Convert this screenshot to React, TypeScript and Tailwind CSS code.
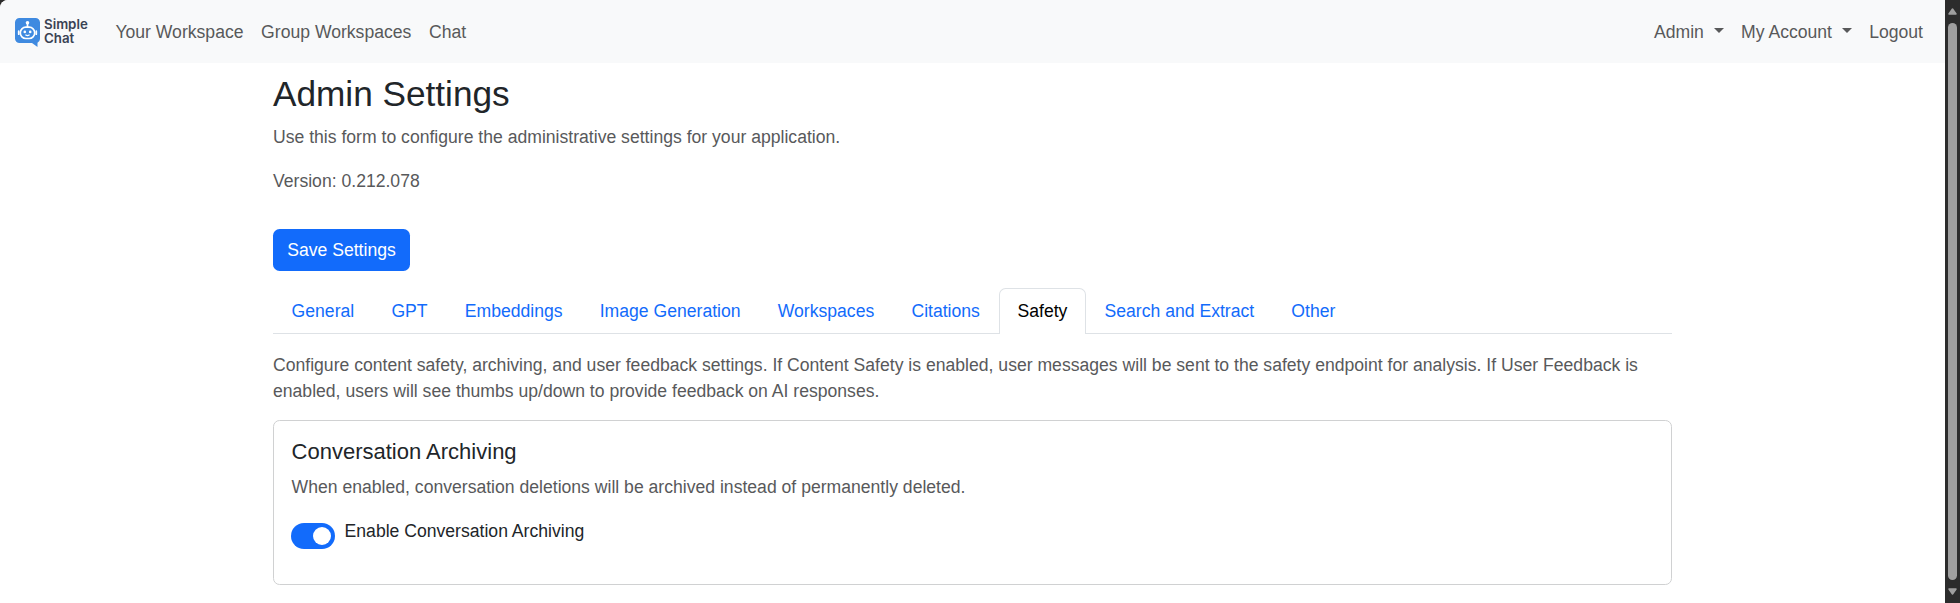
import React from "react";

const tabs = ["General", "GPT", "Embeddings", "Image Generation", "Workspaces", "Citations", "Safety", "Search and Extract", "Other"];

function Logo() {
  return (
    <div className="flex w-[74px] items-start gap-[4px] pt-[2px]">
      <svg width="25" height="29" viewBox="0 0 25 29" className="shrink-0">
        <path d="M4.500 0h16a4.500 4.500 0 0 1 4.500 4.500v16a4.500 4.500 0 0 1-2.500 4.200v4.300l-5.500-4H4.500A4.500 4.500 0 0 1 0 20.500v-16A4.500 4.500 0 0 1 4.500 0z" fill="#3f8ae0" />
        <g fill="none" stroke="#fff" strokeWidth="1.700" strokeLinecap="round">
          <path d="M12.500 5.500v3.500" />
          <rect x="5.300" y="9.200" width="14.400" height="11.300" rx="5.500" />
          <path d="M3.700 13.200v3M21.300 13.200v3" />
          <path d="M10.800 17q1.700 1.200 3.400 0" strokeWidth="1.200" />
        </g>
        <circle cx="12.500" cy="4.800" r="1.800" fill="#fff" />
        <circle cx="9.800" cy="13.900" r="1.300" fill="#fff" />
        <circle cx="15.200" cy="13.900" r="1.300" fill="#fff" />
      </svg>
      <div className="font-['Inter',sans-serif] text-[13.300px] leading-[13.500px] font-semibold text-[#3a4354]">
        Simple
        <br />
        Chat
      </div>
    </div>
  );
}

function Caret() {
  return (
    <svg width="10" height="5" viewBox="0 0 10 5" className="mt-[-4px] ml-[10px]">
      <path d="M0 0h10L5 5z" fill="#58595a" />
    </svg>
  );
}

function Scrollbar() {
  return (
    <div className="flex w-[15px] shrink-0 flex-col items-center bg-[#2c2c2c] pt-[8px] pb-[8px]">
      <svg width="9" height="7" viewBox="0 0 9 7" className="shrink-0">
        <path d="M4.500 1L8 6H1z" fill="#9f9f9f" stroke="#9f9f9f" strokeWidth="1.500" strokeLinejoin="round" />
      </svg>
      <div className="mt-[8px] mb-[8px] w-[9px] flex-1 rounded-full bg-[#9f9f9f]" />
      <svg width="9" height="7" viewBox="0 0 9 7" className="shrink-0">
        <path d="M4.500 6L8 1H1z" fill="#9f9f9f" stroke="#9f9f9f" strokeWidth="1.500" strokeLinejoin="round" />
      </svg>
    </div>
  );
}

export default function App() {
  return (
    <div className="flex h-[603px] w-full overflow-hidden bg-[#2c2c2c] font-['Liberation_Sans',Arial,sans-serif] text-[17.600px] leading-[26.400px] text-[#212529]">
      <div className="min-w-0 flex-1 overflow-hidden rounded-tl-[8px] bg-white">
        <nav className="flex h-[63px] items-center bg-[#f8f9fa] pr-[22px] pl-[15px] text-[#58595a]">
          <Logo />
          <div className="ml-[26.400px] flex flex-1 gap-[17.600px] pt-[2px]">
            <a>Your Workspace</a>
            <a>Group Workspaces</a>
            <a>Chat</a>
          </div>
          <div className="flex gap-[17.200px] pt-[2px]">
            <a className="flex items-center">Admin<Caret /></a>
            <a className="flex items-center">My Account<Caret /></a>
            <a>Logout</a>
          </div>
        </nav>
        <main className="ml-[273px] w-[1399px] pt-[10px]">
          <h2 className="text-[35.200px] leading-[42px]">Admin Settings</h2>
          <p className="mt-[9px] text-[#58595b]">Use this form to configure the administrative settings for your application.</p>
          <p className="mt-[17.600px] text-[#58595b]">Version: 0.212.078</p>
          <button className="mt-[35px] h-[42px] w-[137px] rounded-[6.600px] bg-[#126bfb] text-white">Save Settings</button>
          <div className="mt-[17px] flex border-b border-[#dee2e6]">
            {tabs.map((t) =>
              t === "Safety" ? (
                <button key={t} className="-mb-px ml-[0.400px] h-[46px] rounded-t-[6.600px] border border-b-0 border-[#dee2e6] bg-white px-[17.600px] pb-[2px] text-black">{t}</button>
              ) : (
                <button key={t} className="h-[45px] px-[18.600px]">
                  <span className="text-[#126bfb]">{t}</span>
                </button>
              ),
            )}
          </div>
          <p className="mt-[17.600px] text-[#58595b]">
            Configure content safety, archiving, and user feedback settings. If Content Safety is enabled, user messages will be sent to the safety endpoint for analysis. If User Feedback is enabled, users will see thumbs up/down to provide feedback on AI responses.
          </p>
          <section className="mt-[14.800px] h-[165px] rounded-[6.600px] border border-[#d0d1d2] px-[17.600px] pt-[18.200px]">
            <h5 className="text-[22px] leading-[26.400px]">Conversation Archiving</h5>
            <p className="mt-[9px] text-[#58595b]">When enabled, conversation deletions will be archived instead of permanently deleted.</p>
            <label className="-ml-[0.600px] mt-[17.600px] flex items-start">
              <span className="mt-[5px] flex h-[26px] w-[44px] items-center justify-end rounded-full bg-[#126bfb] pr-[4px]">
                <span className="h-[18px] w-[18px] rounded-full bg-white" />
              </span>
              <span className="ml-[9.600px]">Enable Conversation Archiving</span>
            </label>
          </section>
        </main>
      </div>
      <Scrollbar />
    </div>
  );
}
